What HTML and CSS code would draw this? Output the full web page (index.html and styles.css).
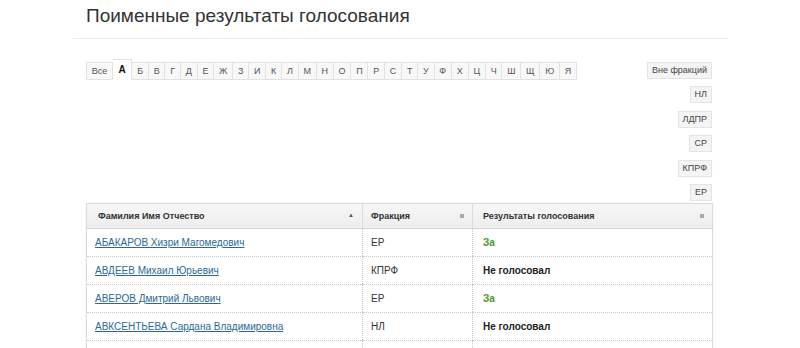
FILE: index.html
```html
<!DOCTYPE html>
<html lang="ru">
<head>
<meta charset="utf-8">
<link rel="stylesheet" href="styles.css">
</head>
<body>
<div class="page">
  <h1 class="title">Поименные результаты голосования</h1>
  <div class="content">
    <div class="filters">
      <ul class="letters">
        <li class="tab">Все</li>
        <li class="tab active">А</li>
        <li class="tab">Б</li>
        <li class="tab">В</li>
        <li class="tab">Г</li>
        <li class="tab">Д</li>
        <li class="tab">Е</li>
        <li class="tab">Ж</li>
        <li class="tab">З</li>
        <li class="tab">И</li>
        <li class="tab">К</li>
        <li class="tab">Л</li>
        <li class="tab">М</li>
        <li class="tab">Н</li>
        <li class="tab">О</li>
        <li class="tab">П</li>
        <li class="tab">Р</li>
        <li class="tab">С</li>
        <li class="tab">Т</li>
        <li class="tab">У</li>
        <li class="tab">Ф</li>
        <li class="tab">Х</li>
        <li class="tab">Ц</li>
        <li class="tab">Ч</li>
        <li class="tab">Ш</li>
        <li class="tab">Щ</li>
        <li class="tab">Ю</li>
        <li class="tab">Я</li>
      </ul>
      <div class="factions">
        <span class="fbtn">Вне фракций</span>
        <span class="fbtn">НЛ</span>
        <span class="fbtn">ЛДПР</span>
        <span class="fbtn">СР</span>
        <span class="fbtn">КПРФ</span>
        <span class="fbtn">ЕР</span>
      </div>
    </div>
    <table class="results">
      <thead>
        <tr>
          <th class="c-name">Фамилия Имя Отчество<span class="sort-up">▲</span></th>
          <th class="c-frac">Фракция<span class="sort-sq"></span></th>
          <th class="c-res">Результаты голосования<span class="sort-sq"></span></th>
        </tr>
      </thead>
      <tbody>
        <tr>
          <td><a href="#" class="dep">АБАКАРОВ Хизри Магомедович</a></td>
          <td>ЕР</td>
          <td class="yes">За</td>
        </tr>
        <tr>
          <td><a href="#" class="dep">АВДЕЕВ Михаил Юрьевич</a></td>
          <td>КПРФ</td>
          <td class="novote">Не голосовал</td>
        </tr>
        <tr>
          <td><a href="#" class="dep">АВЕРОВ Дмитрий Львович</a></td>
          <td>ЕР</td>
          <td class="yes">За</td>
        </tr>
        <tr>
          <td><a href="#" class="dep">АВКСЕНТЬЕВА Сардана Владимировна</a></td>
          <td>НЛ</td>
          <td class="novote">Не голосовал</td>
        </tr>
        <tr>
          <td></td>
          <td></td>
          <td></td>
        </tr>
      </tbody>
    </table>
  </div>
</div>
</body>
</html>
```

FILE: styles.css
```css
html, body {
  margin: 0;
  padding: 0;
  background: #fff;
  font-family: "Liberation Sans", Arial, sans-serif;
  color: #333;
  overflow: hidden;
}

.page {
  width: 655px;
  margin-left: 73px;
}

.title {
  margin: 0;
  padding: 5px 13px 11px;
  font-size: 19px;
  font-weight: normal;
  line-height: 22px;
  color: #333;
  border-bottom: 1px solid #ececec;
}

.content {
  padding: 0 16px 0 13px;
}

.filters {
  display: flex;
  justify-content: space-between;
  align-items: flex-start;
  padding-top: 23px;
}

.letters {
  display: flex;
  list-style: none;
  margin: 0;
  padding: 0;
  border-left: 1px solid #e0e0e0;
}

.tab {
  height: 16px;
  line-height: 16px;
  padding: 0 4.8px;
  font-size: 9px;
  color: #555;
  background: #f8f8f8;
  border-top: 1px solid #e2e2e2;
  border-bottom: 1px solid #e2e2e2;
  border-right: 1px solid #e2e2e2;
}

.tab.active {
  height: 19px;
  margin-top: -3px;
  line-height: 20px;
  padding: 0 5.5px;
  background: #fff;
  border-bottom-color: #fff;
  color: #111;
  font-size: 10px;
  font-weight: bold;
}

.factions {
  display: flex;
  flex-direction: column;
  align-items: flex-end;
  gap: 7.4px;
}

.fbtn {
  display: block;
  height: 15px;
  line-height: 15px;
  padding: 0 4px;
  font-size: 9px;
  color: #444;
  background: #f4f4f4;
  border: 1px solid #e4e4e4;
}

.results {
  width: 627px;
  margin-top: 2px;
  border-collapse: collapse;
  font-size: 10px;
  border: 1px solid #dcdcdc;
  box-shadow: 0 0 2px rgba(0, 0, 0, 0.08);
}

.results th {
  position: relative;
  height: 24px;
  padding: 0 8px 0 11px;
  text-align: left;
  font-size: 9px;
  font-weight: bold;
  color: #333;
  background: linear-gradient(#f7f7f7, #ededed);
  border-left: 1px solid #dcdcdc;
  border-bottom: 1px solid #d4d4d4;
}

.results .c-name { width: 256px; }
.results .c-frac { width: 93px; padding-left: 8px; }
.results .c-res { padding-left: 10px; }

.sort-up {
  position: absolute;
  right: 8px;
  top: 8px;
  font-size: 6px;
  color: #555;
}

.sort-sq {
  position: absolute;
  right: 8px;
  top: 10px;
  width: 4px;
  height: 4px;
  background: #aaa;
}

.results td {
  height: 27px;
  padding: 0 8px;
  border-left: 1px dotted #c8c8c8;
  border-bottom: 1px dotted #c8c8c8;
  color: #333;
}

.results td:last-child {
  padding-left: 10px;
}

.results td .dep {
  color: #2b6a96;
  text-decoration: underline;
}

.results td.yes {
  color: #4e9a32;
  font-weight: bold;
}

.results td.novote {
  font-weight: bold;
  color: #222;
}
```
